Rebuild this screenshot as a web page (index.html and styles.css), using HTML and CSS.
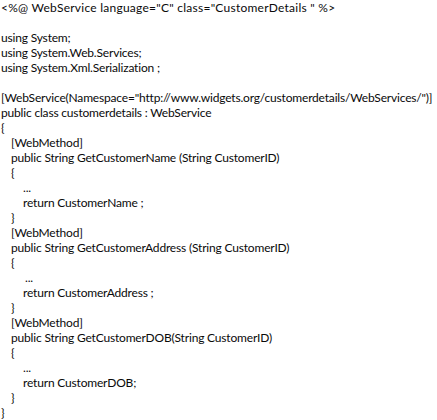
FILE: index.html
```html
<!DOCTYPE html>
<html>
<head>
<meta charset="utf-8">
<link rel="stylesheet" href="styles.css">
</head>
<body>
<div class="code">
  <div class="ln wide">&lt;%@ WebService language="C" class="CustomerDetails " %&gt;</div>
  <div class="ln"> </div>
  <div class="ln">using System;</div>
  <div class="ln">using System.Web.Services;</div>
  <div class="ln">using System.Xml.Serialization ;</div>
  <div class="ln"> </div>
  <div class="ln">[WebService(Namespace="http://www.widgets.org/customerdetails/WebServices/")]</div>
  <div class="ln">public class customerdetails : WebService</div>
  <div class="ln">{</div>
  <div class="ln i1">[WebMethod]</div>
  <div class="ln i1">public String GetCustomerName (String CustomerID)</div>
  <div class="ln i1">{</div>
  <div class="ln i2">...</div>
  <div class="ln i2">return CustomerName ;</div>
  <div class="ln i1">}</div>
  <div class="ln i1">[WebMethod]</div>
  <div class="ln i1">public String GetCustomerAddress (String CustomerID)</div>
  <div class="ln i1">{</div>
  <div class="ln i2 dots">...</div>
  <div class="ln i2">return CustomerAddress ;</div>
  <div class="ln i1">}</div>
  <div class="ln i1">[WebMethod]</div>
  <div class="ln i1">public String GetCustomerDOB(String CustomerID)</div>
  <div class="ln i1">{</div>
  <div class="ln i2">...</div>
  <div class="ln i2">return CustomerDOB;</div>
  <div class="ln i1">}</div>
  <div class="ln">}</div>
</div>
</body>
</html>
```
FILE: styles.css
```css
html, body {
  margin: 0;
  padding: 0;
  background: #ffffff;
}
.code {
  font-family: Lato, "Open Sans", sans-serif;
  font-size: 12px;
  letter-spacing: -0.18px;
  line-height: 15px;
  color: #0a0a0a;
  padding-left: 1px;
}
.ln {
  white-space: pre;
  height: 15px;
}
.wide {
  letter-spacing: 0.25px;
}
.i1 {
  padding-left: 10px;
}
.i2 {
  padding-left: 22px;
}
.dots {
  padding-left: 24px;
}
```
